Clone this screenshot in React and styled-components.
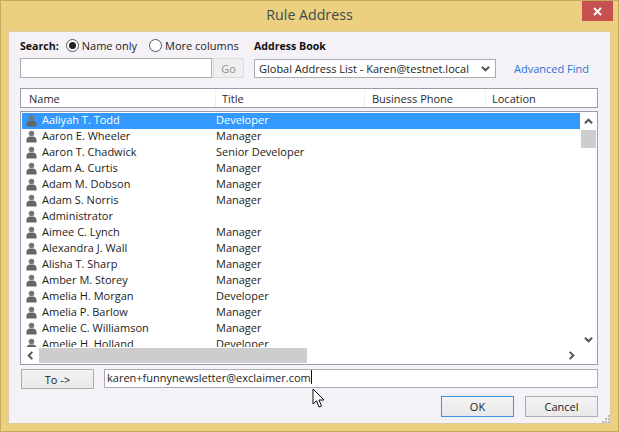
import React from "react";
import styled, { createGlobalStyle } from "styled-components";

const Global = createGlobalStyle`
  html, body { margin: 0; padding: 0; background: #ecd080; }
  * { box-sizing: border-box; }
`;

const Window = styled.div`
  position: relative;
  width: 619px;
  height: 432px;
  display: flex;
  flex-direction: column;
  padding: 0 7px 7px;
  background: #ebd07f;
  border: 1px solid #c5aa60;
  font-family: "Open Sans", "Noto Sans", sans-serif;
  font-size: 11px;
  color: #1c1c1c;
  overflow: hidden;
`;
const TitleBar = styled.div`
  height: 30px;
  flex: none;
  display: flex;
  align-items: center;
  justify-content: center;
  font-size: 14.2px;
  color: #3c4a52;
  padding-bottom: 3px;
`;
const CloseButton = styled.div`
  position: absolute;
  top: 0;
  right: 5px;
  width: 31px;
  height: 20px;
  background: #c75050;
  display: flex;
  align-items: center;
  justify-content: center;
`;
const Panel = styled.div`
  flex: 1;
  display: flex;
  flex-direction: column;
  padding: 6px 12px 0 11px;
  background: #f5f2f7;
  border: 1px solid #dccb9c;
`;
const SearchGrid = styled.div`
  display: grid;
  grid-template-columns: 234px 242px auto;
  grid-template-rows: 15px 20px;
  row-gap: 5px;
  align-items: center;
`;
const RadioRow = styled.div`
  display: flex;
  align-items: center;
`;
const Bold = styled.span`
  font-weight: 700;
  font-size: 10.6px;
  color: #111;
`;
const RadioLabel = styled.label`
  display: flex;
  align-items: center;
  gap: 3px;
  margin-left: ${(p) => p.$ml}px;
  white-space: nowrap;
`;
const RadioCircle = styled.span`
  width: 13px;
  height: 13px;
  border-radius: 50%;
  border: 1px solid #555;
  background: #fff;
  display: flex;
  align-items: center;
  justify-content: center;
  &::after {
    content: "";
    display: ${(p) => (p.$on ? "block" : "none")};
    width: 7px;
    height: 7px;
    border-radius: 50%;
    background: #222;
  }
`;
const SearchBox = styled.div`
  display: flex;
  gap: 1px;
  height: 20px;
`;
const SearchInput = styled.div`
  width: 192px;
  background: #fff;
  border: 1px solid #ababb3;
`;
const GoButton = styled.div`
  width: 31px;
  background: #efefef;
  border: 1px solid #dcdcdc;
  color: #8f8f8f;
  display: flex;
  align-items: center;
  justify-content: center;
`;
const Select = styled.div`
  height: 19px;
  margin-top: 1px;
  width: 242px;
  background: #fff;
  border: 1px solid #ababb3;
  display: flex;
  align-items: center;
  justify-content: space-between;
  padding: 0 5px 0 4px;
  white-space: nowrap;
`;
const Link = styled.span`
  margin-left: 18px;
  color: #2a72d4;
  white-space: nowrap;
`;
const Header = styled.div`
  margin-top: 10px;
  height: 20px;
  flex: none;
  background: #fff;
  border: 1px solid #9b9baa;
  display: grid;
  grid-template-columns: 195px 149px 121px 1fr;
`;
const HeaderCell = styled.div`
  display: flex;
  align-items: center;
  padding-left: ${(p) => p.$pl}px;
  border-right: 1px solid #f0f0f3;
  color: #2a2a2a;
  &:last-child { border-right: 0; }
`;
const List = styled.div`
  margin-top: 3px;
  height: 254px;
  flex: none;
  background: #fff;
  border: 1px solid #9b9baa;
  padding: 1px;
  display: grid;
  grid-template-columns: 1fr 16px;
  grid-template-rows: 1fr 15px;
`;
const Rows = styled.div`
  overflow: hidden;
  height: 234px;
`;
const Row = styled.div`
  height: 16px;
  line-height: 14px;
  display: grid;
  grid-template-columns: 20px 174px 1fr;
  align-items: start;
  background: ${(p) => (p.$selected ? "#3399ff" : "transparent")};
  color: ${(p) => (p.$selected ? "#fff" : "#1c1c1c")};
  white-space: nowrap;
`;
const PersonIcon = styled.svg`
  width: 11px;
  height: 13px;
  margin-left: 4px;
  margin-top: 1px;
  display: block;
`;
const VScroll = styled.div`
  display: flex;
  flex-direction: column;
  align-items: center;
`;
const ArrowBox = styled.div`
  width: 16px;
  height: 17px;
  flex: none;
  display: flex;
  align-items: center;
  justify-content: center;
`;
const VThumb = styled.div`
  width: 15px;
  height: 18px;
  background: #cdcdcd;
`;
const Spacer = styled.div`
  flex: 1;
`;
const HScroll = styled.div`
  display: flex;
  align-items: center;
`;
const HArrow = styled.div`
  width: 17px;
  height: 15px;
  flex: none;
  display: flex;
  align-items: center;
  justify-content: center;
`;
const HThumb = styled.div`
  width: 268px;
  height: 15px;
  background: #cdcdcd;
`;
const ToRow = styled.div`
  margin-top: 4px;
  display: flex;
  align-items: flex-start;
  padding-left: 1px;
`;
const ToButton = styled.div`
  width: 73px;
  height: 20px;
  background: linear-gradient(#f3f3f3, #e9e9e9);
  border: 1px solid #acacac;
  display: flex;
  align-items: center;
  justify-content: center;
`;
const ToInput = styled.div`
  margin-left: 10px;
  width: 494px;
  height: 19px;
  line-height: 15px;
  background: #fff;
  border: 1px solid #ababb3;
  display: flex;
  align-items: flex-start;
  padding-left: 2px;
  white-space: nowrap;
`;
const Caret = styled.span`
  display: inline-block;
  width: 1px;
  height: 14px;
  background: #111;
`;
const Footer = styled.div`
  margin-top: 7px;
  display: flex;
  justify-content: flex-end;
  gap: 11px;
`;
const DialogButton = styled.div`
  width: 73px;
  height: 21px;
  background: linear-gradient(#f3f3f3, #e9e9e9);
  border: 1px solid ${(p) => (p.$focus ? "#3d93e0" : "#acacac")};
  display: flex;
  align-items: center;
  justify-content: center;
`;
const Pointer = styled.svg`
  position: absolute;
  left: 311px;
  top: 387px;
  width: 14px;
  height: 21px;
`;
const Grip = styled.svg`
  position: absolute;
  left: 601px;
  top: 414px;
  width: 9px;
  height: 9px;
`;

const people = [
  ["Aaliyah T. Todd", "Developer"],
  ["Aaron E. Wheeler", "Manager"],
  ["Aaron T. Chadwick", "Senior Developer"],
  ["Adam A. Curtis", "Manager"],
  ["Adam M. Dobson", "Manager"],
  ["Adam S. Norris", "Manager"],
  ["Administrator", ""],
  ["Aimee C. Lynch", "Manager"],
  ["Alexandra J. Wall", "Manager"],
  ["Alisha T. Sharp", "Manager"],
  ["Amber M. Storey", "Manager"],
  ["Amelia H. Morgan", "Developer"],
  ["Amelia P. Barlow", "Manager"],
  ["Amelie C. Williamson", "Manager"],
  ["Amelie H. Holland", "Developer"],
];

const Person = () => (
  <PersonIcon viewBox="0 0 12 14">
    <circle cx="6" cy="3.6" r="3" fill="#767676" />
    <path d="M0.5 13.5V10.5C0.5 8.4 2.6 7.2 4.2 7H7.8C9.4 7.2 11.5 8.4 11.5 10.5V13.5Z" fill="#666" />
  </PersonIcon>
);

const Chevron = ({ d, size = 9 }) => (
  <svg width={size} height={size} viewBox="0 0 10 10">
    <path d={d} fill="none" stroke="#555" strokeWidth="2.2" />
  </svg>
);

export default function App() {
  return (
    <>
      <Global />
      <Window>
        <TitleBar>Rule Address</TitleBar>
        <CloseButton>
          <svg width="9" height="9" viewBox="0 0 9 9">
            <path d="M1 1L8 8M8 1L1 8" stroke="#fff" strokeWidth="2" />
          </svg>
        </CloseButton>
        <Panel>
          <SearchGrid>
            <RadioRow>
              <Bold>Search:</Bold>
              <RadioLabel $ml={7}>
                <RadioCircle $on />
                Name only
              </RadioLabel>
              <RadioLabel $ml={12}>
                <RadioCircle />
                More columns
              </RadioLabel>
            </RadioRow>
            <Bold>Address Book</Bold>
            <span />
            <SearchBox>
              <SearchInput />
              <GoButton>Go</GoButton>
            </SearchBox>
            <Select>
              Global Address List - Karen@testnet.local
              <Chevron d="M1 3L5 7L9 3" />
            </Select>
            <Link>Advanced Find</Link>
          </SearchGrid>
          <Header>
            <HeaderCell $pl={8}>Name</HeaderCell>
            <HeaderCell $pl={6}>Title</HeaderCell>
            <HeaderCell $pl={7}>Business Phone</HeaderCell>
            <HeaderCell $pl={6}>Location</HeaderCell>
          </Header>
          <List>
            <Rows>
              {people.map(([name, title], i) => (
                <Row key={name} $selected={i === 0}>
                  <Person />
                  <span>{name}</span>
                  <span>{title}</span>
                </Row>
              ))}
            </Rows>
            <VScroll>
              <ArrowBox>
                <Chevron d="M1 7L5 3L9 7" />
              </ArrowBox>
              <VThumb />
              <Spacer />
              <ArrowBox>
                <Chevron d="M1 3L5 7L9 3" />
              </ArrowBox>
            </VScroll>
            <HScroll>
              <HArrow>
                <Chevron d="M7 1L3 5L7 9" />
              </HArrow>
              <HThumb />
              <Spacer />
              <HArrow>
                <Chevron d="M3 1L7 5L3 9" />
              </HArrow>
            </HScroll>
          </List>
          <ToRow>
            <ToButton>To -&gt;</ToButton>
            <ToInput>
              karen+funnynewsletter@exclaimer.com
              <Caret />
            </ToInput>
          </ToRow>
          <Footer>
            <DialogButton $focus>OK</DialogButton>
            <DialogButton>Cancel</DialogButton>
          </Footer>
        </Panel>
        <Pointer viewBox="0 0 14 21">
          <path d="M1 1V16L4.5 12.8L7 19L9.5 18L7 12H12Z" fill="#fff" stroke="#111" strokeWidth="1" />
        </Pointer>
        <Grip viewBox="0 0 9 9">
          <g fill="#b9b9b9">
            <rect x="6" y="0" width="2" height="2" />
            <rect x="3" y="3" width="2" height="2" />
            <rect x="6" y="3" width="2" height="2" />
            <rect x="0" y="6" width="2" height="2" />
            <rect x="3" y="6" width="2" height="2" />
            <rect x="6" y="6" width="2" height="2" />
          </g>
        </Grip>
      </Window>
    </>
  );
}
